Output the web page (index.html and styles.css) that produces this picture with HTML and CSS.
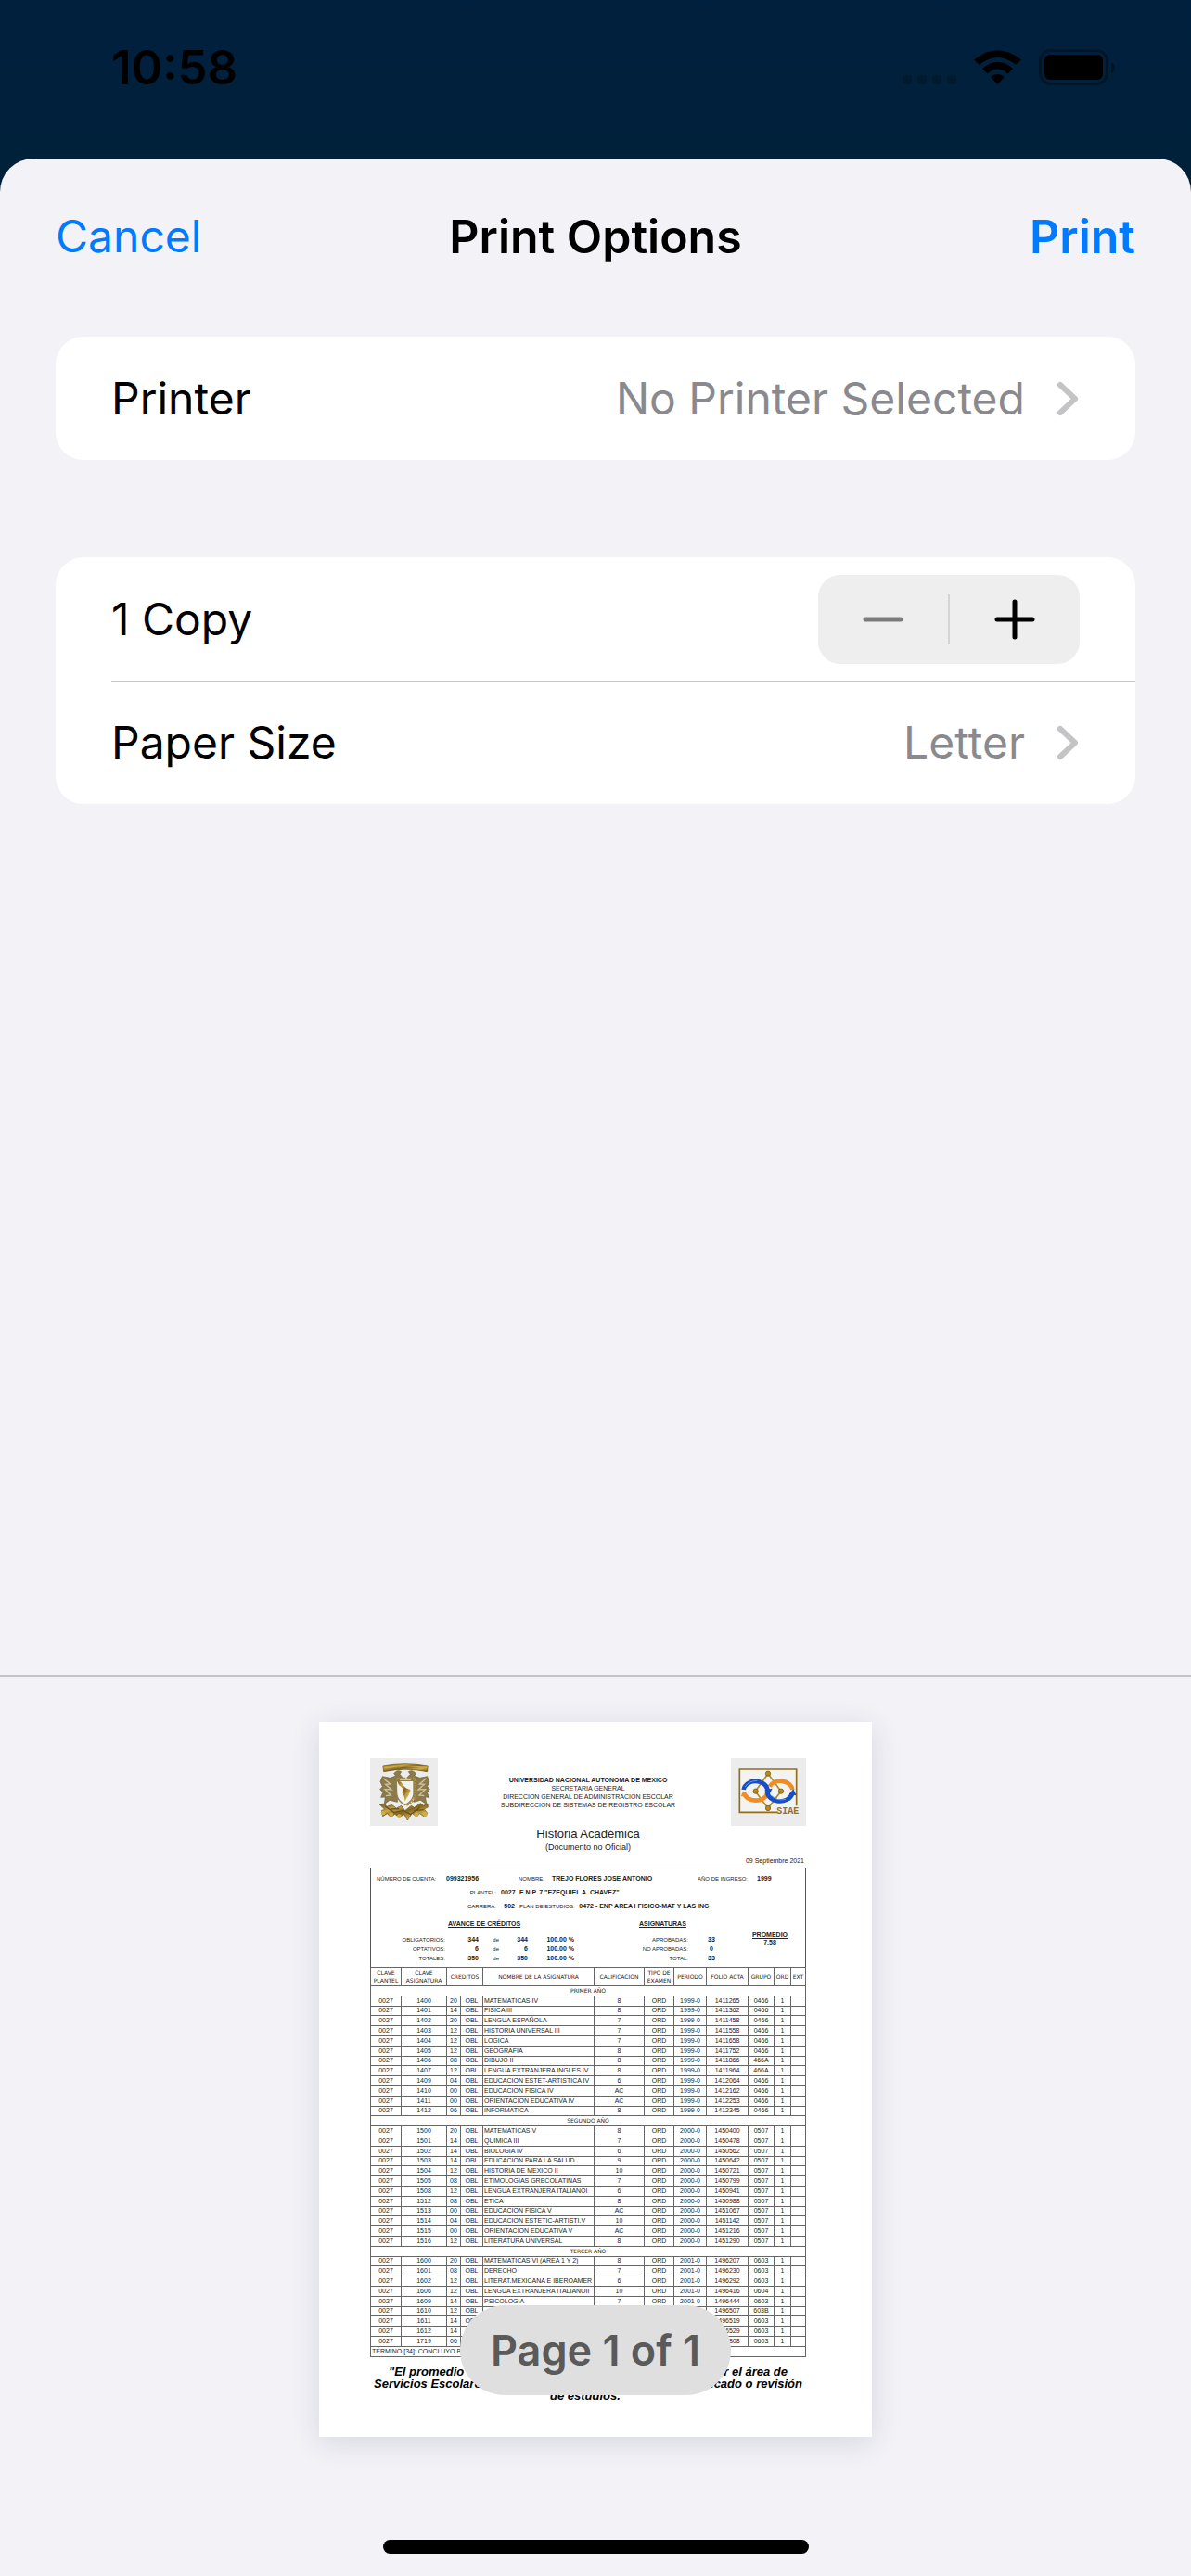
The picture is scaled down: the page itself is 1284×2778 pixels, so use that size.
FILE: index.html
```html
<!DOCTYPE html>
<html lang="en">
<head>
<meta charset="utf-8">
<meta name="viewport" content="width=device-width, initial-scale=1">
<title>Print Options</title>
<link rel="stylesheet" href="styles.css">
</head>
<body>
<header class="status">
  <time class="clock">10:58</time>
  <svg class="status-icons" viewBox="0 0 232 40" aria-hidden="true">
    <g fill="#001a30"><rect x="0" y="28" width="10" height="10" rx="3"/><rect x="16" y="28" width="10" height="10" rx="3"/><rect x="32" y="28" width="10" height="10" rx="3"/><rect x="48" y="28" width="10" height="10" rx="3"/></g>
    <path d="M77 11.500Q102.500-9 128 11.500L122 17Q102.500 1 83 17ZM86 21Q102.500 6.500 119 21L113.500 26.500Q102.500 16.500 91.500 26.500ZM95 30Q102.500 24 110 30L102.500 38Z"/>
    <rect x="148.500" y="1.500" width="72" height="36" rx="11" fill="none" stroke="#001526" stroke-width="3"/>
    <rect x="153" y="6" width="63" height="27" rx="6"/>
    <path fill="#001526" d="M225 14Q229 16 229 20T225 26Z"/>
  </svg>
</header>
<main class="sheet">
  <nav class="nav">
    <button class="link" type="button">Cancel</button>
    <h1 class="title">Print Options</h1>
    <button class="link strong" type="button">Print</button>
  </nav>
  <section class="options">
    <div class="card">
      <button class="row" type="button"><span>Printer</span><span class="value">No Printer Selected</span><svg class="chevron" viewBox="0 0 24 38" aria-hidden="true"><path d="M3 4L19 19L3 34"/></svg></button>
    </div>
    <div class="card">
      <div class="row">
        <span>1 Copy</span>
        <div class="stepper">
          <button type="button" aria-label="Fewer copies" disabled><svg viewBox="0 0 44 44"><path d="M3 22H41"/></svg></button>
          <button type="button" aria-label="More copies"><svg viewBox="0 0 44 44"><path d="M3 22H41M22 3V41"/></svg></button>
        </div>
      </div>
      <button class="row ruled" type="button"><span>Paper Size</span><span class="value">Letter</span><svg class="chevron" viewBox="0 0 24 38" aria-hidden="true"><path d="M3 4L19 19L3 34"/></svg></button>
    </div>
  </section>
  <section class="preview" aria-label="Preview">
    <article class="paper" lang="es">
      <header class="letterhead">
        <svg class="crest" viewBox="57 48 219 219" role="img" aria-label="UNAM">
          <defs><linearGradient id="gold" x1="0" y1="0" x2="1" y2="1"><stop offset="0" stop-color="#6b531b"/><stop offset=".3" stop-color="#c9a546"/><stop offset=".5" stop-color="#806422"/><stop offset=".75" stop-color="#d0ad49"/><stop offset="1" stop-color="#665016"/></linearGradient></defs>
          <path fill="#ececec" d="M57 48h219v219H57z"/>
          <path fill="url(#gold)" stroke="#60501f" stroke-width="2" d="M98 72Q170 58 244 72L242 92Q170 77 101 92Z"/>
          <path fill="none" stroke="#c8a74f" stroke-width="4" d="M106 80Q170 67 236 80"/>
          <path fill="#8c7a49" stroke="#6a5d3b" stroke-width="2" d="M134 98Q144 84 158 92L153 100L162 110L147 122L145 190L120 184L103 197L106 174L92 175L99 158L89 149L97 140L90 124L97 107L122 112L140 105ZM205 98Q195 84 181 92L187 100L177 110L197 122L199 190L220 184L240 197L235 174L247 175L241 158L250 149L242 140L248 124L242 107L218 112L200 105Z"/>
          <path fill="none" stroke="#ccc3a4" stroke-width="4" d="M100 113L122 132L107 133L126 150L105 149L124 168L108 170M239 113L217 132L232 133L213 150L235 149L216 168L232 170"/>
          <path fill="#f2f2ef" stroke="#8d7f50" stroke-width="4" d="M142 121H198V165Q195 187 170 199Q146 187 143 164Z"/>
          <path fill="none" stroke="#aa8d3e" stroke-width="7" stroke-dasharray="7 3" d="M145 114H203V174Q193 193 173 201"/>
          <path fill="url(#gold)" d="M144 121L157 125L165 137L173 145L188 151L181 169L169 187L167 171L160 158L164 148L150 134Z"/>
          <path fill="url(#gold)" stroke="#685014" stroke-width="2" d="M88 198L103 195L111 205L127 199L142 210L158 202L170 218L190 202L200 208L220 194L230 202L243 195L244 207L232 213L242 226L234 239L218 227L207 238L193 226L178 249L167 230L151 239L137 229L124 239L112 227L98 236L94 218L104 214Z"/>
          <g fill="#d2ad42"><circle cx="99" cy="225" r="7"/><circle cx="125" cy="230" r="7"/><circle cx="151" cy="236" r="7"/><circle cx="207" cy="230" r="7"/><circle cx="235" cy="230" r="7"/></g>
          <path fill="none" stroke="#6c5419" stroke-width="4" d="M105 204L135 224L165 217L188 230L218 208M122 213L151 212M199 218L230 215"/>
        </svg>
        <div class="heads">
          <p><b>UNIVERSIDAD NACIONAL AUTONOMA DE MEXICO</b></p>
          <p>SECRETARIA GENERAL</p>
          <p>DIRECCION GENERAL DE ADMINISTRACION ESCOLAR</p>
          <p>SUBDIRECCION DE SISTEMAS DE REGISTRO ESCOLAR</p>
        </div>
        <svg class="siae" viewBox="54 48 243 219" role="img" aria-label="SIAE">
          <path fill="#ececec" d="M54 48h243v219H54z"/>
          <path fill="#f3f3f1" stroke="#8f6d1c" stroke-width="5" d="M206 223H82V84H266V202"/>
          <path fill="none" stroke="#b58c20" stroke-width="5" d="M174 98L216 155L174 210L133 155Z"/>
          <g fill="none" stroke-width="14"><path stroke="#ef8d24" d="M96 160A39 31 0 0 0 172 162M179 140A39 31 0 0 1 253 150"/><path stroke="#174fc9" d="M95 150A39 31 0 0 1 172 148A41 32 0 0 0 253 162"/></g>
          <path fill="#174fc9" d="M164 150L188 146L177 168ZM241 166L256 148L266 169Z"/><path fill="#ef8d24" d="M86 172L94 155L107 169Z"/>
          <path fill="none" stroke="#6795ee" stroke-width="3" d="M100 141Q112 121 139 121M186 170Q204 188 231 181"/>
          <g fill="#b68b18" stroke="#66501a" stroke-width="2"><circle cx="174" cy="98" r="8"/><circle cx="216" cy="155" r="8"/><circle cx="174" cy="210" r="8"/><circle cx="134" cy="155" r="8"/></g>
          <text x="202" y="228" class="siae-name">SIAE</text>
        </svg>
      </header>
      <h2 class="doc-title">Historia Académica</h2>
      <p class="doc-sub">(Documento no Oficial)</p>
      <p class="doc-date">09 Septiembre 2021</p>
      <div class="record">
        <div class="person">
          <span>NÚMERO DE CUENTA:</span><b>099321956</b><span>NOMBRE:</span><b>TREJO FLORES JOSE ANTONIO</b><span>AÑO DE INGRESO:</span><b>1999</b>
        </div>
        <div class="school"><span>PLANTEL:</span><b>0027</b><b>E.N.P. 7 "EZEQUIEL A. CHAVEZ"</b></div>
        <div class="school"><span>CARRERA:</span><b>502</b><span class="plan">PLAN DE ESTUDIOS: <b>0472 - ENP AREA I FISICO-MAT Y LAS ING</b></span></div>
        <div class="totals">
          <div><h3>AVANCE DE CRÉDITOS</h3>
            <div class="credits">
              <span>OBLIGATORIOS:</span><b>344</b><span>de</span><b>344</b><b>100.00 %</b>
              <span>OPTATIVOS:</span><b>6</b><span>de</span><b>6</b><b>100.00 %</b>
              <span>TOTALES:</span><b>350</b><span>de</span><b>350</b><b>100.00 %</b>
            </div>
          </div>
          <div><h3>ASIGNATURAS</h3>
            <div class="subjects"><span>APROBADAS:</span><b>33</b><span>NO APROBADAS:</span><b>0</b><span>TOTAL:</span><b>33</b></div>
          </div>
          <div class="average"><h3>PROMEDIO</h3><b>7.58</b></div>
        </div>
        <table class="grades">
          <colgroup><col class="c1"><col class="c2"><col class="c3"><col class="c4"><col class="c5"><col class="c6"><col class="c7"><col class="c8"><col class="c9"><col class="c10"><col class="c11"><col class="c12"></colgroup>
          <thead><tr><th>CLAVE PLANTEL</th><th>CLAVE ASIGNATURA</th><th colspan="2">CREDITOS</th><th>NOMBRE DE LA ASIGNATURA</th><th>CALIFICACION</th><th>TIPO DE EXAMEN</th><th>PERIODO</th><th>FOLIO ACTA</th><th>GRUPO</th><th>ORD</th><th>EXT</th></tr></thead>
          <tbody>
          <tr><td colspan="12" class="year">PRIMER AÑO</td></tr>
          <tr><td>0027</td><td>1400</td><td>20</td><td>OBL</td><td>MATEMATICAS IV</td><td>8</td><td>ORD</td><td>1999-0</td><td>1411265</td><td>0466</td><td>1</td><td></td></tr>
          <tr><td>0027</td><td>1401</td><td>14</td><td>OBL</td><td>FISICA III</td><td>8</td><td>ORD</td><td>1999-0</td><td>1411362</td><td>0466</td><td>1</td><td></td></tr>
          <tr><td>0027</td><td>1402</td><td>20</td><td>OBL</td><td>LENGUA ESPAÑOLA</td><td>7</td><td>ORD</td><td>1999-0</td><td>1411458</td><td>0466</td><td>1</td><td></td></tr>
          <tr><td>0027</td><td>1403</td><td>12</td><td>OBL</td><td>HISTORIA UNIVERSAL III</td><td>7</td><td>ORD</td><td>1999-0</td><td>1411558</td><td>0466</td><td>1</td><td></td></tr>
          <tr><td>0027</td><td>1404</td><td>12</td><td>OBL</td><td>LOGICA</td><td>7</td><td>ORD</td><td>1999-0</td><td>1411658</td><td>0466</td><td>1</td><td></td></tr>
          <tr><td>0027</td><td>1405</td><td>12</td><td>OBL</td><td>GEOGRAFIA</td><td>8</td><td>ORD</td><td>1999-0</td><td>1411752</td><td>0466</td><td>1</td><td></td></tr>
          <tr><td>0027</td><td>1406</td><td>08</td><td>OBL</td><td>DIBUJO II</td><td>8</td><td>ORD</td><td>1999-0</td><td>1411866</td><td>466A</td><td>1</td><td></td></tr>
          <tr><td>0027</td><td>1407</td><td>12</td><td>OBL</td><td>LENGUA EXTRANJERA INGLES IV</td><td>8</td><td>ORD</td><td>1999-0</td><td>1411964</td><td>466A</td><td>1</td><td></td></tr>
          <tr><td>0027</td><td>1409</td><td>04</td><td>OBL</td><td>EDUCACION ESTET-ARTISTICA IV</td><td>6</td><td>ORD</td><td>1999-0</td><td>1412064</td><td>0466</td><td>1</td><td></td></tr>
          <tr><td>0027</td><td>1410</td><td>00</td><td>OBL</td><td>EDUCACION FISICA IV</td><td>AC</td><td>ORD</td><td>1999-0</td><td>1412162</td><td>0466</td><td>1</td><td></td></tr>
          <tr><td>0027</td><td>1411</td><td>00</td><td>OBL</td><td>ORIENTACION EDUCATIVA IV</td><td>AC</td><td>ORD</td><td>1999-0</td><td>1412253</td><td>0466</td><td>1</td><td></td></tr>
          <tr><td>0027</td><td>1412</td><td>06</td><td>OBL</td><td>INFORMATICA</td><td>8</td><td>ORD</td><td>1999-0</td><td>1412345</td><td>0466</td><td>1</td><td></td></tr>
          <tr><td colspan="12" class="year">SEGUNDO AÑO</td></tr>
          <tr><td>0027</td><td>1500</td><td>20</td><td>OBL</td><td>MATEMATICAS V</td><td>8</td><td>ORD</td><td>2000-0</td><td>1450400</td><td>0507</td><td>1</td><td></td></tr>
          <tr><td>0027</td><td>1501</td><td>14</td><td>OBL</td><td>QUIMICA III</td><td>7</td><td>ORD</td><td>2000-0</td><td>1450478</td><td>0507</td><td>1</td><td></td></tr>
          <tr><td>0027</td><td>1502</td><td>14</td><td>OBL</td><td>BIOLOGIA IV</td><td>6</td><td>ORD</td><td>2000-0</td><td>1450562</td><td>0507</td><td>1</td><td></td></tr>
          <tr><td>0027</td><td>1503</td><td>14</td><td>OBL</td><td>EDUCACION PARA LA SALUD</td><td>9</td><td>ORD</td><td>2000-0</td><td>1450642</td><td>0507</td><td>1</td><td></td></tr>
          <tr><td>0027</td><td>1504</td><td>12</td><td>OBL</td><td>HISTORIA DE MEXICO II</td><td>10</td><td>ORD</td><td>2000-0</td><td>1450721</td><td>0507</td><td>1</td><td></td></tr>
          <tr><td>0027</td><td>1505</td><td>08</td><td>OBL</td><td>ETIMOLOGIAS GRECOLATINAS</td><td>7</td><td>ORD</td><td>2000-0</td><td>1450799</td><td>0507</td><td>1</td><td></td></tr>
          <tr><td>0027</td><td>1508</td><td>12</td><td>OBL</td><td>LENGUA EXTRANJERA ITALIANOI</td><td>6</td><td>ORD</td><td>2000-0</td><td>1450941</td><td>0507</td><td>1</td><td></td></tr>
          <tr><td>0027</td><td>1512</td><td>08</td><td>OBL</td><td>ETICA</td><td>8</td><td>ORD</td><td>2000-0</td><td>1450988</td><td>0507</td><td>1</td><td></td></tr>
          <tr><td>0027</td><td>1513</td><td>00</td><td>OBL</td><td>EDUCACION FISICA V</td><td>AC</td><td>ORD</td><td>2000-0</td><td>1451067</td><td>0507</td><td>1</td><td></td></tr>
          <tr><td>0027</td><td>1514</td><td>04</td><td>OBL</td><td>EDUCACION ESTETIC-ARTISTI.V</td><td>10</td><td>ORD</td><td>2000-0</td><td>1451142</td><td>0507</td><td>1</td><td></td></tr>
          <tr><td>0027</td><td>1515</td><td>00</td><td>OBL</td><td>ORIENTACION EDUCATIVA V</td><td>AC</td><td>ORD</td><td>2000-0</td><td>1451216</td><td>0507</td><td>1</td><td></td></tr>
          <tr><td>0027</td><td>1516</td><td>12</td><td>OBL</td><td>LITERATURA UNIVERSAL</td><td>8</td><td>ORD</td><td>2000-0</td><td>1451290</td><td>0507</td><td>1</td><td></td></tr>
          <tr><td colspan="12" class="year">TERCER AÑO</td></tr>
          <tr><td>0027</td><td>1600</td><td>20</td><td>OBL</td><td>MATEMATICAS VI (AREA 1 Y 2)</td><td>8</td><td>ORD</td><td>2001-0</td><td>1496207</td><td>0603</td><td>1</td><td></td></tr>
          <tr><td>0027</td><td>1601</td><td>08</td><td>OBL</td><td>DERECHO</td><td>7</td><td>ORD</td><td>2001-0</td><td>1496230</td><td>0603</td><td>1</td><td></td></tr>
          <tr><td>0027</td><td>1602</td><td>12</td><td>OBL</td><td>LITERAT.MEXICANA E IBEROAMER</td><td>6</td><td>ORD</td><td>2001-0</td><td>1496292</td><td>0603</td><td>1</td><td></td></tr>
          <tr><td>0027</td><td>1606</td><td>12</td><td>OBL</td><td>LENGUA EXTRANJERA ITALIANOII</td><td>10</td><td>ORD</td><td>2001-0</td><td>1496416</td><td>0604</td><td>1</td><td></td></tr>
          <tr><td>0027</td><td>1609</td><td>14</td><td>OBL</td><td>PSICOLOGIA</td><td>7</td><td>ORD</td><td>2001-0</td><td>1496444</td><td>0603</td><td>1</td><td></td></tr>
          <tr><td>0027</td><td>1610</td><td>12</td><td>OBL</td><td></td><td></td><td></td><td></td><td>1496507</td><td>603B</td><td>1</td><td></td></tr>
          <tr><td>0027</td><td>1611</td><td>14</td><td>OBL</td><td></td><td></td><td></td><td></td><td>1496519</td><td>0603</td><td>1</td><td></td></tr>
          <tr><td>0027</td><td>1612</td><td>14</td><td></td><td></td><td></td><td></td><td></td><td>1496529</td><td>0603</td><td>1</td><td></td></tr>
          <tr><td>0027</td><td>1719</td><td>06</td><td></td><td></td><td></td><td></td><td></td><td>1496808</td><td>0603</td><td>1</td><td></td></tr>
          <tr><td colspan="12" class="term">TÉRMINO [34]: CONCLUYO BA</td></tr>
          </tbody>
        </table>
      </div>
      <footer class="notice">
        <p><span>"El promedio</span><span>por el área de</span></p>
        <p class="wide"><span>Servicios Escolares</span><span>certificado o revisión</span></p>
        <p class="last">de estudios."</p>
      </footer>
      <span class="badge" lang="en">Page 1 of 1</span>
    </article>
    <div class="home-bar"></div>
  </section>
</main>
</body>
</html>
```
FILE: styles.css
```css
* { box-sizing: border-box; }

body {
  display: flex;
  flex-direction: column;
  min-height: 100vh;
  margin: 0;
  background: linear-gradient(#00203f, #00213a 171px, #002034 210px);
  color: #000;
  font-family: Inter, "Liberation Sans", sans-serif;
  font-size: 48px;
  line-height: 60px;
}

h1, h2, h3, p { margin: 0; font-weight: 400; }

button {
  margin: 0;
  padding: 0;
  border: 0;
  background: none;
  color: inherit;
  font: inherit;
}

.status {
  display: flex;
  justify-content: space-between;
  height: 171px;
  padding: 43px 79px 0 120px;
}
.clock { font-size: 51px; font-weight: 600; }
.status-icons { width: 232px; height: 40px; margin-top: 10px; }

.sheet {
  display: flex;
  flex: 1;
  flex-direction: column;
  border-radius: 36px 36px 0 0;
  background: #f2f2f7;
}

.nav {
  display: grid;
  grid-template-columns: 1fr auto 1fr;
  align-items: center;
  padding: 54px 60px 78px;
}
.link { justify-self: start; color: #007aff; }
.strong { justify-self: end; font-size: 50px; font-weight: 600; }
.title { font-size: 50px; font-weight: 600; }

.options {
  display: flex;
  flex: 1;
  flex-direction: column;
  gap: 105px;
  padding: 0 60px;
}
.card { padding-left: 60px; border-radius: 30px; background: #fff; }
.row {
  display: flex;
  align-items: center;
  width: 100%;
  height: 133px;
  padding-right: 60px;
  text-align: left;
}
.ruled { border-top: 1px solid #c6c6c8; }
.value { margin-left: auto; color: #8a8a8e; }
.chevron { width: 24px; height: 38px; margin-left: 35px; }
.chevron path {
  fill: none;
  stroke: #c4c4c6;
  stroke-width: 6;
  stroke-linecap: round;
  stroke-linejoin: round;
}

.stepper {
  display: flex;
  align-items: center;
  width: 282px;
  height: 96px;
  margin-left: auto;
  border-radius: 24px;
  background: #eeeeef;
}
.stepper button {
  display: flex;
  flex: 1;
  align-items: center;
  justify-content: center;
  height: 54px;
}
.stepper button + button { border-left: 2px solid #d5d5d6; }
.stepper svg { width: 44px; height: 44px; }
.stepper path { fill: none; stroke: #000; stroke-width: 5; stroke-linecap: round; }
.stepper :disabled path { stroke: #7b7b7b; }

.preview {
  display: flex;
  flex-direction: column;
  align-items: center;
  padding: 48px 0 24px;
  border-top: 3px solid #c3c2c8;
}

.paper {
  position: relative;
  width: 596px;
  height: 771px;
  padding: 39px 71px 0 55px;
  background: #fff;
  box-shadow: 0 6px 30px rgba(60, 50, 90, .14);
  color: #222;
  font-family: "Liberation Sans", Arial, sans-serif;
  font-size: 6px;
  line-height: 8px;
  white-space: nowrap;
}
.paper b { font-size: 7px; }

.letterhead { display: flex; justify-content: space-between; }
.crest { width: 73px; height: 73px; }
.siae { width: 81px; height: 73px; }
.siae-name {
  fill: #94721e;
  font-family: "Liberation Mono", monospace;
  font-size: 30px;
  font-weight: 700;
}
.heads { padding: 19px 0 0 8px; font-size: 7px; line-height: 9px; text-align: center; }
.doc-title { font-size: 13px; line-height: 18px; text-align: center; }
.doc-sub { font-size: 9px; line-height: 10px; text-align: center; }
.doc-date { padding: 5px 2px 2px 0; font-size: 7px; line-height: 10px; text-align: right; }

.record { border: 1px solid #555; border-width: 1px 1px 0; }
.person {
  display: grid;
  grid-template-columns: 75px 78px 36px 157px 64px 1fr;
  padding: 7px 0 0 6px;
}
.school {
  display: grid;
  grid-template-columns: 135px 15px 1fr;
  column-gap: 5px;
  padding-top: 7px;
}
.school > :first-child, .school > :nth-child(2) { text-align: right; }
.plan b { margin-left: 3px; }

.totals {
  display: grid;
  grid-template-columns: 260px 115px 1fr;
  height: 61px;
  padding-top: 11px;
}
h3 { font-size: 7px; font-weight: 700; line-height: 8px; text-decoration: underline; }
.totals h3 { padding-left: 83px; }
.totals div + div h3 { padding-left: 29px; }
.totals .average h3 { padding: 0; }
.credits, .subjects { display: grid; line-height: 10px; padding-top: 8px; }
.credits { grid-template-columns: 80px 36px 22px 31px 50px; text-align: right; }
.subjects { grid-template-columns: 82px 29px; text-align: right; }
.subjects b { width: 8px; margin-left: 21px; text-align: center; }
.average { padding: 12px 0 0 17px; text-align: center; }

.grades {
  width: 469px;
  height: 421px;
  margin-left: -1px;
  border-collapse: collapse;
  table-layout: fixed;
  font-size: 7px;
  text-align: center;
}
.grades th, .grades td { padding: 0; border: 1px solid #666; }
.grades th {
  height: 20px;
  font-family: "DejaVu Sans", sans-serif;
  font-size: 6px;
  font-weight: 400;
  white-space: normal;
}
.grades td:nth-child(5), .grades .term { padding-left: 1px; text-align: left; }
.grades .year { font-family: "DejaVu Sans", sans-serif; font-size: 6px; }
.c1 { width: 33px; }
.c2 { width: 49px; }
.c3 { width: 15px; }
.c4 { width: 24px; }
.c5 { width: 120px; }
.c6 { width: 54px; }
.c7 { width: 32px; }
.c8 { width: 35px; }
.c9 { width: 45px; }
.c10 { width: 28px; }
.c11 { width: 18px; }
.c12 { width: 16px; }

.notice {
  padding-top: 9px;
  color: #000;
  font-size: 13px;
  font-style: italic;
  line-height: 13px;
}
.notice p {
  display: flex;
  justify-content: space-between;
  padding: 0 20px;
  font-weight: 700;
}
.notice .wide { padding: 0 4px; }
.notice .last { justify-content: center; }

.badge {
  position: absolute;
  bottom: 45px;
  left: 50%;
  width: 292px;
  margin-left: -146px;
  border-radius: 48px;
  background: #dfdfdf;
  color: #5a5a5a;
  font-family: Inter, sans-serif;
  font-size: 45px;
  font-weight: 600;
  line-height: 97px;
  text-align: center;
}

.home-bar {
  width: 459px;
  height: 15px;
  margin-top: 111px;
  border-radius: 8px;
  background: #000;
}
```
